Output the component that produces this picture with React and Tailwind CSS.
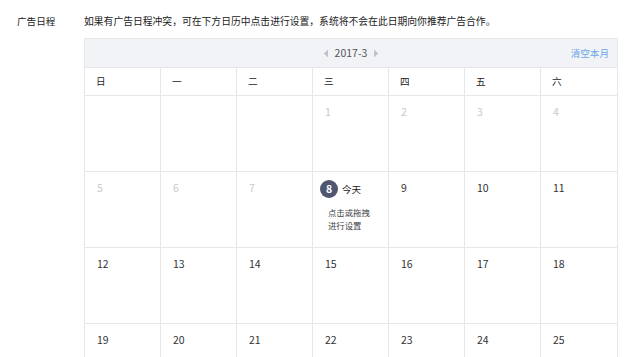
import { useState } from "react";

const WEEK = ["日", "一", "二", "三", "四", "五", "六"];

// 2017-3 starts on a Wednesday
const CELLS = [
  null, null, null,
  { d: 1, past: true }, { d: 2, past: true }, { d: 3, past: true }, { d: 4, past: true },
  { d: 5, past: true }, { d: 6, past: true }, { d: 7, past: true }, { d: 8, today: true },
  { d: 9 }, { d: 10 }, { d: 11 },
  { d: 12 }, { d: 13 }, { d: 14 }, { d: 15 }, { d: 16 }, { d: 17 }, { d: 18 },
  { d: 19 }, { d: 20 }, { d: 21 }, { d: 22 }, { d: 23 }, { d: 24 }, { d: 25 },
];

function TriLeft() {
  return (
    <svg width="6" height="9" viewBox="0 0 6 9">
      <path d="M5 0.5 L0.8 4.5 L5 8.5 Z" fill="#bfc2c9" />
    </svg>
  );
}

function TriRight() {
  return (
    <svg width="6" height="9" viewBox="0 0 6 9">
      <path d="M1 0.5 L5.2 4.5 L1 8.5 Z" fill="#bfc2c9" />
    </svg>
  );
}

export default function App() {
  const [month] = useState("2017-3");

  return (
    <div
      className="w-[640px] h-[357px] overflow-hidden bg-white text-[#333] text-[10px]"
      style={{ fontFamily: '"Noto Sans CJK SC", "Noto Sans", sans-serif' }}
    >
      <div className="flex pt-[12px]">
        {/* 左侧标签 */}
        <div className="w-[84px] pl-[17px] leading-[18px] text-[9.6px] text-[#222]">广告日程</div>

        <div className="w-[534px]">
          <p className="leading-[18px] text-[9.8px] text-[#222]">
            如果有广告日程冲突，可在下方日历中点击进行设置，系统将不会在此日期向你推荐广告合作。
          </p>

          {/* 日历 */}
          <div className="mt-[8px] border border-[#e6e7eb]">
            {/* header */}
            <div className="relative h-[28px] bg-[#f2f3f7] flex items-center justify-center">
              <div className="flex items-center gap-[6px] text-[#555]">
                <TriLeft />
                <span className="text-[10.5px]">{month}</span>
                <TriRight />
              </div>
              <button className="absolute right-[8px] top-[6px] text-[9.6px] text-[#6aa7e8] leading-[16px]">
                清空本月
              </button>
            </div>

            <div className="grid grid-cols-7">
              {WEEK.map((w, i) => (
                <div
                  key={w}
                  className={`h-[28px] border-t border-[#e6e7eb] pl-[11px] flex items-center text-[9.6px] text-[#222] ${
                    i < 6 ? "border-r" : ""
                  }`}
                >
                  {w}
                </div>
              ))}

              {CELLS.map((c, i) => (
                <div
                  key={i}
                  className={`h-[76px] border-t border-[#e6e7eb] ${
                    i % 7 < 6 ? "border-r" : ""
                  } pl-[12px] pt-[8px]`}
                >
                  {c && c.today ? (
                    <div>
                      <div className="flex items-center -ml-[5px]">
                        <span className="w-[18px] h-[18px] rounded-full bg-[#4f5670] text-white text-[10.5px] font-bold flex items-center justify-center">
                          {c.d}
                        </span>
                        <span className="ml-[4px] text-[9.6px] text-[#222]">今天</span>
                      </div>
                      <div className="mt-[8px] pl-[3px] text-[8.4px] leading-[13px] text-[#444]">
                        <div>点击或拖拽</div>
                        <div>进行设置</div>
                      </div>
                    </div>
                  ) : c ? (
                    <span
                      className={`text-[10.5px] leading-[16px] ${
                        c.past ? "text-[#c8c8c8]" : "text-[#333]"
                      }`}
                    >
                      {c.d}
                    </span>
                  ) : null}
                </div>
              ))}
            </div>
          </div>
        </div>
      </div>
    </div>
  );
}
